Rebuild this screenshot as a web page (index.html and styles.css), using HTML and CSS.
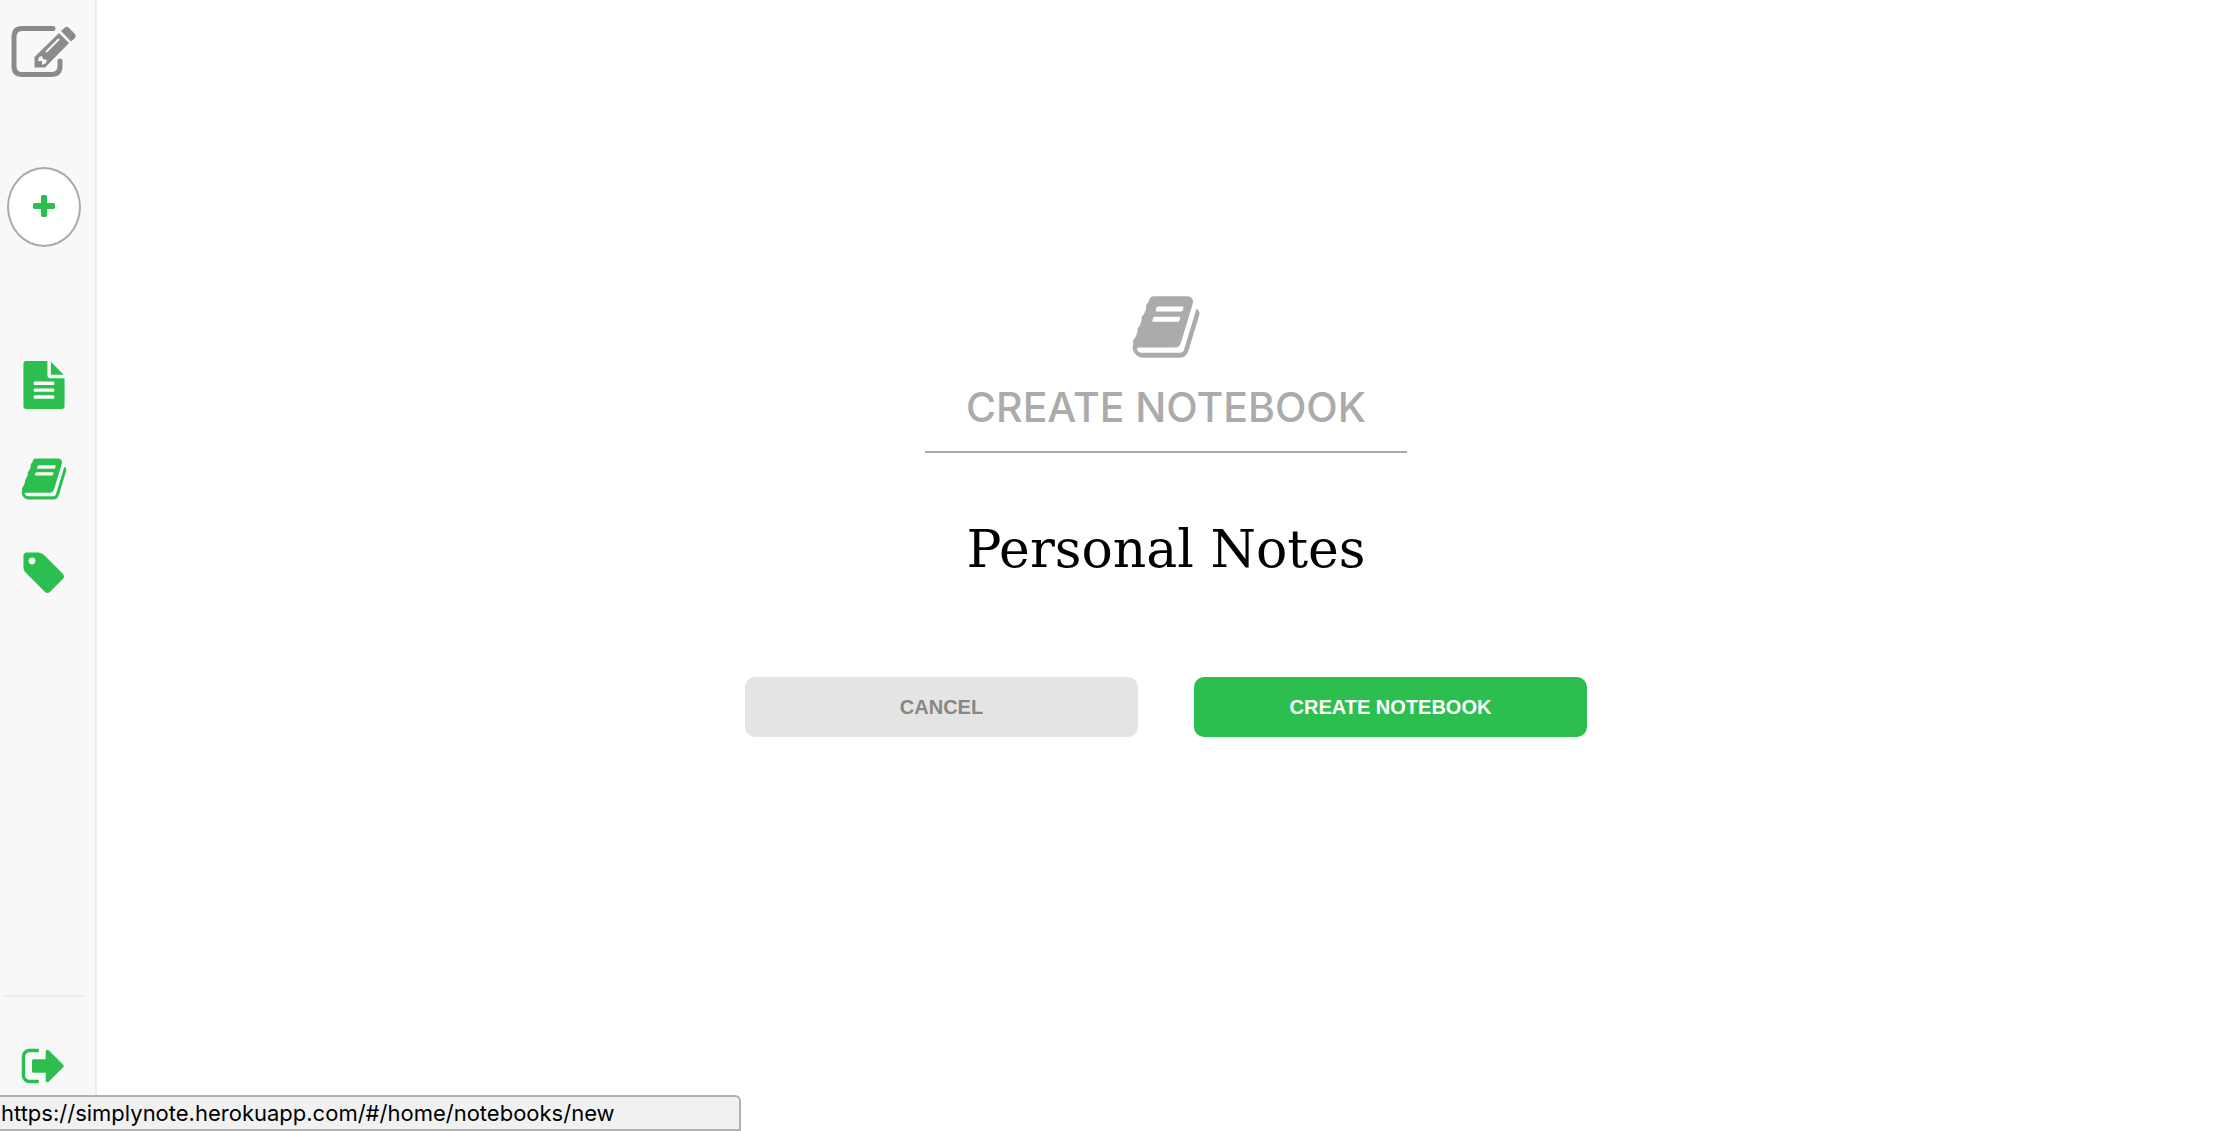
FILE: index.html
```html
<!DOCTYPE html>
<html lang="en">
<head>
<meta charset="utf-8">
<title>SimplyNote</title>
<link rel="stylesheet" href="styles.css">
</head>
<body>
<svg class="sprite" aria-hidden="true">
  <symbol id="book" viewBox="0 0 1792 1792"><path d="M1703 478q40 57 18 129l-275 906q-19 64-76.500 107.500t-122.500 43.500h-923q-77 0-148.500-53.500t-99.500-131.500q-24-67-2-127 0-4 3-27t4-37q1-8-3-21.500t-3-19.500q2-11 8-21t16.500-23.500 16.500-23.500q23-38 45-91.500t30-91.500q3-10 .5-30t-.5-28q3-11 17-28t17-23q21-36 42-92t25-90q1-9-2.500-32t.5-28q4-13 22-30.500t22-22.500q19-26 42.500-84.500t27.500-96.500q1-8-3-25.500t-2-26.500q2-8 9-18t18-23 17-21q8-12 16.500-30.500t15-35 16-36 19.500-32 26.500-23.500 36-11.500 47.500 5.500l-1 3q38-9 51-9h761q74 0 114 56t18 130l-274 906q-36 119-71.500 153.500t-128.500 34.500h-869q-27 0-38 15-11 16-1 43 24 70 144 70h923q29 0 56-15.500t35-41.500l300-987q7-22 5-57 38 15 59 43zm-1064 2q-4 13 2 22.500t20 9.500h608q13 0 25.500-9.500t16.500-22.500l21-64q4-13-2-22.500t-20-9.500h-608q-13 0-25.500 9.500t-16.500 22.500zm-83 256q-4 13 2 22.500t20 9.500h608q13 0 25.500-9.500t16.500-22.500l21-64q4-13-2-22.500t-20-9.500h-608q-13 0-25.500 9.500t-16.500 22.500z"/></symbol>
</svg>
<div class="app">
  <nav class="sidebar" aria-label="Main">
    <a class="logo" href="#/home" aria-label="Home">
      <svg viewBox="8 20 72 62" aria-hidden="true">
        <path class="logo-page" d="M53 28.500H22Q14 28.500 14 37V66Q14 74.500 22 74.500H51Q60 74.500 60 66V61"/>
        <path d="M34.500 57L59 33L69 43L45 67.500H34.500Z"/>
        <path d="M61 31L65 27.500Q67 26 69 28L75 34Q76.500 36 75 38L71 41.500Z"/>
        <path class="logo-cut" d="M46 52L59 39"/>
        <path class="logo-tip" d="M39 57L42 56L43 59L47 60L46 63L42 65V61H38Z"/>
      </svg>
    </a>
    <a class="add" href="#/home/notes/new" aria-label="New note">
      <svg viewBox="0 0 1792 1792" aria-hidden="true"><path d="M1600 736v192q0 40-28 68t-68 28h-416v416q0 40-28 68t-68 28h-192q-40 0-68-28t-28-68v-416h-416q-40 0-68-28t-28-68v-192q0-40 28-68t68-28h416v-416q0-40 28-68t68-28h192q40 0 68 28t28 68v416h416q40 0 68 28t28 68z"/></svg>
    </a>
    <div class="links">
      <a class="link" href="#/home/notes" aria-label="Notes"><svg viewBox="0 0 1792 1792" aria-hidden="true"><path d="M1596 476q14 14 28 36h-472v-472q22 14 36 28zm-476 164h544v1056q0 40-28 68t-68 28h-1344q-40 0-68-28t-28-68v-1600q0-40 28-68t68-28h800v544q0 40 28 68t68 28zm160 736v-64q0-14-9-23t-23-9h-704q-14 0-23 9t-9 23v64q0 14 9 23t23 9h704q14 0 23-9t9-23zm0-256v-64q0-14-9-23t-23-9h-704q-14 0-23 9t-9 23v64q0 14 9 23t23 9h704q14 0 23-9t9-23zm0-256v-64q0-14-9-23t-23-9h-704q-14 0-23 9t-9 23v64q0 14 9 23t23 9h704q14 0 23-9t9-23z"/></svg></a>
      <a class="link" href="#/home/notebooks" aria-label="Notebooks"><svg aria-hidden="true"><use href="#book"/></svg></a>
      <a class="link" href="#/home/tags" aria-label="Tags"><svg viewBox="0 0 1792 1792" aria-hidden="true"><path d="M576 448q0-53-37.500-90.500t-90.500-37.500-90.500 37.500-37.500 90.500 37.500 90.500 90.500 37.500 90.500-37.500 37.500-90.500zm1067 576q0 53-37 90l-491 492q-39 37-91 37-53 0-90-37l-715-716q-38-37-64.500-101t-26.500-117v-416q0-52 38-90t90-38h416q53 0 117 26.500t102 64.500l715 714q37 39 37 91z"/></svg></a>
    </div>
    <div class="session">
      <a class="link" href="#/logout" aria-label="Log out"><svg viewBox="0 0 1792 1792" aria-hidden="true"><path d="M704 1440q0 4 1 20t.5 26.500-3 23.500-10 19.500-20.500 6.500h-320q-119 0-203.500-84.500t-84.500-203.500v-704q0-119 84.500-203.500t203.500-84.500h320q13 0 22.500 9.500t9.500 22.500q0 4 1 20t.5 26.500-3 23.500-10 19.500-20.500 6.500h-320q-66 0-113 47t-47 113v704q0 66 47 113t113 47h312l11.500 1 11.500 3 8 5.500 7 9 2 13.500zm928-544q0 26-19 45l-544 544q-19 19-45 19t-45-19-19-45v-288h-448q-26 0-45-19t-19-45v-384q0-26 19-45t45-19h448v-288q0-26 19-45t45-19 45 19l544 544q19 19 19 45z"/></svg></a>
    </div>
  </nav>
  <main class="main">
    <form class="form">
      <header class="heading">
        <svg class="heading-icon" aria-hidden="true"><use href="#book"/></svg>
        <h1>CREATE NOTEBOOK</h1>
      </header>
      <input class="title" type="text" value="Personal Notes" aria-label="Notebook title">
      <div class="actions">
        <button class="button cancel" type="button">CANCEL</button>
        <button class="button create" type="submit">CREATE NOTEBOOK</button>
      </div>
    </form>
  </main>
</div>
<div class="status">https://simplynote.herokuapp.com/#/home/notebooks/new</div>
</body>
</html>
```
FILE: styles.css
```css
* { box-sizing: border-box; }
body { margin: 0; background: #fff; font-family: "Liberation Sans", Arial, sans-serif; }
svg { display: block; fill: currentColor; }
.sprite { position: absolute; width: 0; height: 0; }
.app { display: flex; min-height: 100vh; }

.sidebar {
  flex: none;
  display: flex;
  flex-direction: column;
  align-items: center;
  width: 97px;
  padding: 20px 7px 0 0;
  background: #f8f8f8;
  border-right: 2px solid #ebebeb;
  color: #2dbe50;
}
.logo { color: #8b8b8b; }
.logo svg { width: 72px; height: 62px; }
.logo-page { fill: none; stroke: currentColor; stroke-width: 5; stroke-linecap: round; }
.logo-cut { fill: none; stroke: #f8f8f8; stroke-width: 2; }
.logo-tip { fill: #f8f8f8; }
.add {
  display: flex;
  align-items: center;
  justify-content: center;
  width: 74px;
  height: 80px;
  margin-top: 85px;
  border: 2px solid #ababab;
  border-radius: 50%;
  background: #fff;
  color: #2dbe50;
}
.add svg { width: 28px; height: 28px; }
.links { display: flex; flex-direction: column; gap: 46px; margin-top: 114px; }
.link { color: #2dbe50; }
.link svg { width: 48px; height: 48px; }
.session {
  display: flex;
  justify-content: center;
  width: 82px;
  height: 136px;
  margin-top: auto;
  padding-top: 45px;
  border-top: 2px solid #ebebeb;
}

.main { flex: 1; display: flex; justify-content: center; padding: 291px 0 0 3px; }
.form { display: flex; flex-direction: column; align-items: center; width: 842px; }
.heading {
  display: flex;
  flex-direction: column;
  align-items: center;
  width: 482px;
  height: 162px;
  border-bottom: 2px solid #ababab;
  color: #ababab;
}
.heading-icon { width: 72px; height: 72px; }
h1 { margin: 20px 0 0; font: 500 41px/48px Inter, sans-serif; white-space: nowrap; }
.title {
  width: 100%;
  height: 80px;
  margin-top: 56px;
  padding: 0;
  border: 0;
  outline: 0;
  background: none;
  color: #000;
  font: 52px/80px "DejaVu Serif", serif;
  text-align: center;
}
.actions { display: flex; gap: 56px; width: 100%; margin-top: 88px; }
.button {
  flex: 1;
  height: 60px;
  padding: 0;
  border: 0;
  border-radius: 10px;
  font: bold 20px/60px "Liberation Sans", Arial, sans-serif;
}
.cancel { background: #e4e4e4; color: #878787; }
.create { background: #2dbe50; color: #fff; }

.status {
  position: fixed;
  left: 0;
  bottom: 0;
  width: 741px;
  height: 36px;
  padding-left: 1px;
  border: 2px solid #b1b1b1;
  border-left: 0;
  border-top-right-radius: 6px;
  background: #f1f1f1;
  color: #000;
  font: 22px/32px Inter, sans-serif;
}
```
